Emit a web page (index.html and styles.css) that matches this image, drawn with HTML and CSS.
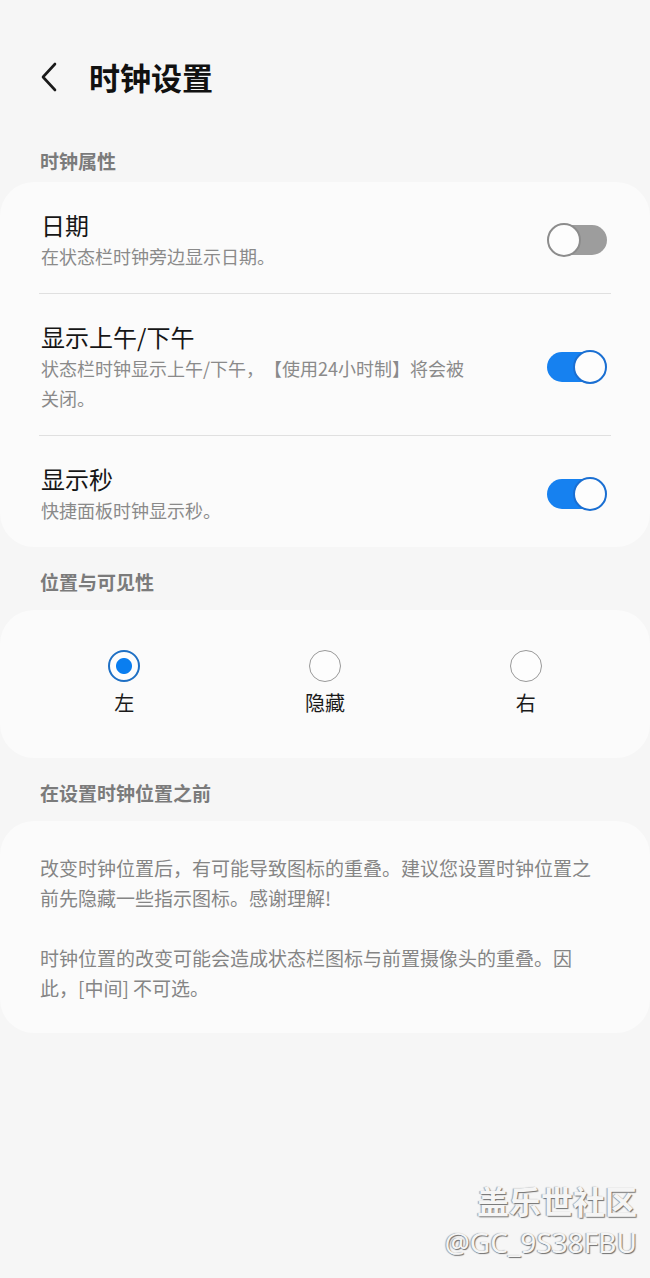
FILE: index.html
```html
<!DOCTYPE html>
<html lang="zh-CN">
<head>
    <meta charset="UTF-8">
    <meta name="viewport" content="width=device-width, initial-scale=1.0">
    <title>时钟设置</title>
    <link rel="stylesheet" href="styles.css">
</head>
<body>
    <div class="page">
        <header class="appbar">
            <svg class="back" width="20" height="30" viewBox="0 0 20 30">
                <path d="M15 2 L3 15 L15 28" fill="none" stroke="#1a1a1a" stroke-width="2.6" stroke-linecap="round" stroke-linejoin="round"/>
            </svg>
            <h1 class="title">时钟设置</h1>
        </header>

        <!-- 时钟属性 -->
        <div class="section-label first">时钟属性</div>
        <section class="card">
            <div class="row">
                <div class="row-text">
                    <div class="row-title">日期</div>
                    <div class="row-sub">在状态栏时钟旁边显示日期。</div>
                </div>
                <span class="switch"><span class="knob"></span></span>
            </div>
            <div class="row">
                <div class="row-text">
                    <div class="row-title">显示上午/下午</div>
                    <div class="row-sub">状态栏时钟显示上午/下午，【使用24小时制】将会被关闭。</div>
                </div>
                <span class="switch on"><span class="knob"></span></span>
            </div>
            <div class="row">
                <div class="row-text">
                    <div class="row-title">显示秒</div>
                    <div class="row-sub">快捷面板时钟显示秒。</div>
                </div>
                <span class="switch on"><span class="knob"></span></span>
            </div>
        </section>

        <!-- 位置与可见性 -->
        <div class="section-label">位置与可见性</div>
        <section class="card radios">
            <div class="radio-item">
                <span class="radio checked"></span>
                <span class="radio-label">左</span>
            </div>
            <div class="radio-item">
                <span class="radio"></span>
                <span class="radio-label">隐藏</span>
            </div>
            <div class="radio-item">
                <span class="radio"></span>
                <span class="radio-label">右</span>
            </div>
        </section>

        <!-- 说明 -->
        <div class="section-label">在设置时钟位置之前</div>
        <section class="card notes">
            <p>改变时钟位置后，有可能导致图标的重叠。建议您设置时钟位置之前先隐藏一些指示图标。感谢理解!</p>
            <p>时钟位置的改变可能会造成状态栏图标与前置摄像头的重叠。因此，[中间] 不可选。</p>
        </section>

        <div class="watermark">
            <div class="wm-name">盖乐世社区</div>
            <div class="wm-id">@GC_9S38FBU</div>
        </div>
    </div>
</body>
</html>
```

FILE: styles.css
```css
body {
    margin: 0;
    padding: 0;
    background-color: #f6f6f6;
    font-family: "Noto Sans CJK SC", "Noto Sans", sans-serif;
    color: #141414;
    text-spacing-trim: space-all;
}
.page {
    position: relative;
    width: 650px;
    min-height: 1278px;
}
.appbar {
    display: flex;
    align-items: center;
    height: 40px;
    padding: 57px 0 52px 40px;
}
.back {
    display: block;
}
.title {
    margin: 0 0 0 29px;
    font-size: 31px;
    font-weight: 700;
    line-height: 40px;
    color: #111;
}
.section-label {
    padding: 0 40px;
    margin: 23px 0 16px;
    font-size: 19px;
    font-weight: 700;
    line-height: 24px;
    color: #7b7b7b;
}
.section-label.first {
    margin: 0 0 9px;
}
.card {
    background-color: #fbfbfb;
    border-radius: 34px;
    padding: 0 39px;
}
.row {
    display: flex;
    align-items: center;
    gap: 70px;
    padding: 26px 0 22px;
    border-top: 1px solid #e0e0e0;
}
.row:first-child {
    border-top: none;
}
.row-text {
    flex: 1;
    padding-left: 2px;
}
.row-title {
    font-size: 24px;
    line-height: 33px;
    color: #161616;
}
.row-sub {
    font-size: 18px;
    line-height: 30px;
    color: #8a8a8a;
}
.switch {
    position: relative;
    flex: none;
    width: 60px;
    height: 34px;
    margin-right: 4px;
}
.switch::before {
    content: "";
    position: absolute;
    left: 10px;
    right: 0;
    top: 2px;
    bottom: 2px;
    border-radius: 15px;
    background-color: #9d9d9d;
}
.switch .knob {
    position: absolute;
    left: 0;
    top: 0;
    width: 30px;
    height: 30px;
    border-radius: 50%;
    background-color: #fdfdfd;
    border: 2px solid #8c8c8c;
}
.switch.on::before {
    left: 0;
    right: 10px;
    background-color: #1681f0;
}
.switch.on .knob {
    left: auto;
    right: 0;
    border-color: #1a6fd2;
}
.radios {
    display: grid;
    grid-template-columns: repeat(3, 1fr);
    padding: 40px 24px 42px;
}
.radio-item {
    display: flex;
    flex-direction: column;
    align-items: center;
    gap: 8px;
}
.radio {
    box-sizing: border-box;
    width: 32px;
    height: 32px;
    border-radius: 50%;
    border: 1.5px solid #999;
    background-color: #fdfdfd;
}
.radio.checked {
    border: 2px solid #1f70c4;
    background: radial-gradient(circle, #0a7ef0 0 7.5px, #fdfdfd 8.5px);
}
.radio-label {
    font-size: 20px;
    line-height: 26px;
    color: #1a1a1a;
}
.notes {
    padding: 32px 45px 30px 40px;
}
.notes p {
    margin: 0;
    font-size: 19px;
    line-height: 30px;
    color: #858585;
}
.notes p + p {
    margin-top: 30px;
}
.watermark {
    position: absolute;
    right: 13px;
    top: 1180px;
    text-align: right;
    color: #f5f5f5;
    text-shadow: 1px 1px 1px #6f6f6f, -1px 0 1px #a0a0a0;
}
.wm-name {
    font-size: 32px;
    font-weight: 700;
    line-height: 40px;
}
.wm-id {
    font-family: "Noto Sans", sans-serif;
    font-size: 28px;
    line-height: 44px;
}
```
